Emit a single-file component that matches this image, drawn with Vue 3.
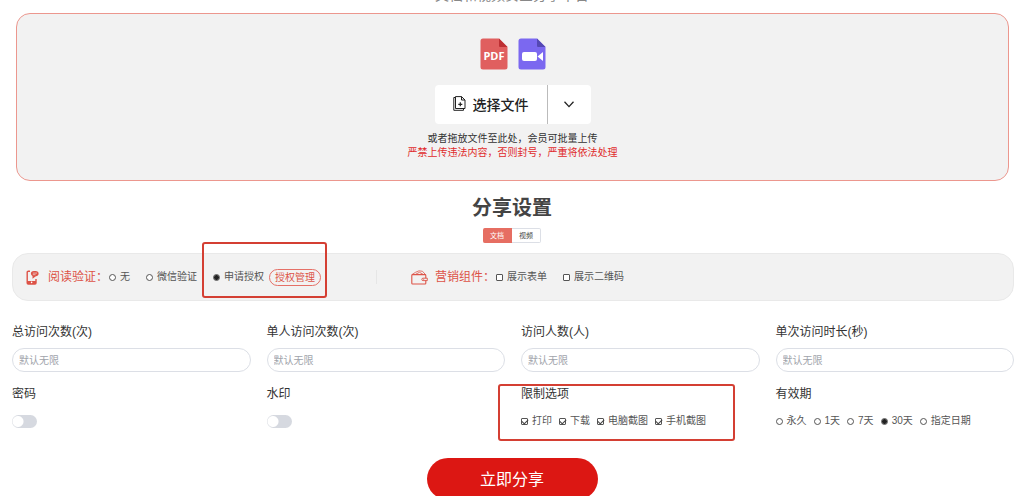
<script setup>
import { ref, reactive } from 'vue'

const kind = ref('文档')
const verify = ref('申请授权')
const verifyOptions = ['无', '微信验证', '申请授权']
const widgets = reactive([
  { name: '展示表单', on: false },
  { name: '展示二维码', on: false }
])
const fields = ['总访问次数(次)', '单人访问次数(次)', '访问人数(人)', '单次访问时长(秒)']
const switches = reactive([
  { name: '密码', on: false },
  { name: '水印', on: false }
])
const limits = reactive([
  { name: '打印', on: true },
  { name: '下载', on: true },
  { name: '电脑截图', on: true },
  { name: '手机截图', on: true }
])
const expiry = ref('30天')
const expiryOptions = ['永久', '1天', '7天', '30天', '指定日期']
</script>

<template>
  <main class="page">
    <p class="intro">文档和视频安全分享平台</p>

    <section class="drop">
      <div class="types">
        <svg class="type" viewBox="0 0 28 32" aria-hidden="true">
          <path d="M3 0.5H19L27.5 9V29a2.500 2.500 0 0 1-2.500 2.500H3A2.500 2.500 0 0 1 .5 29V3A2.500 2.500 0 0 1 3 .5z" fill="#e05f5f" />
          <path d="M19 .5L27.500 9H20a1 1 0 0 1-1-1z" fill="#bd2f33" />
          <text x="14" y="22" text-anchor="middle" class="pdf">PDF</text>
        </svg>
        <svg class="type" viewBox="0 0 28 32" aria-hidden="true">
          <path d="M3 0.5H19L27.5 9V29a2.500 2.500 0 0 1-2.500 2.500H3A2.500 2.500 0 0 1 .5 29V3A2.500 2.500 0 0 1 3 .5z" fill="#7b68f0" />
          <path d="M19 .5L27.500 9H20a1 1 0 0 1-1-1z" fill="#5548b4" />
          <rect x="4" y="14" width="15" height="9" rx="2" fill="#fff" />
          <path d="M19.500 18.500L25 14V23z" fill="#fff" />
        </svg>
      </div>
      <div class="picker">
        <button type="button" class="choose">
          <svg class="file" viewBox="0 0 13 15" fill="none" stroke="#222" aria-hidden="true">
            <path d="M2.500 .6H8.500L12 4V12.500H2.500z" />
            <path d="M8.500 .6V4H12" />
            <path d="M2.500 1.500H.8V14.300H10.500V12.700" />
            <path d="M7.300 6.300V10.300M5.300 8.300H9.300" stroke-width="1.200" />
          </svg>
          选择文件
        </button>
        <button type="button" class="more" aria-label="更多">
          <svg class="arrow" viewBox="0 0 10 7" fill="none" stroke="#222" stroke-width="1.300" aria-hidden="true">
            <path d="M.5 .8L5 5.600L9.500 .8" />
          </svg>
        </button>
      </div>
      <p class="hint">或者拖放文件至此处，会员可批量上传</p>
      <p class="hint warn">严禁上传违法内容，否则封号，严重将依法处理</p>
    </section>

    <h1 class="title">分享设置</h1>
    <div class="tabs">
      <button v-for="k in ['文档', '视频']" :key="k" type="button" class="tab" :class="{ active: kind === k }" @click="kind = k">{{ k }}</button>
    </div>

    <section class="bar">
      <div class="group verify">
        <svg class="phone" viewBox="0 0 13 15" fill="none" aria-hidden="true">
          <path d="M4 1.200H2.300Q1.200 1.200 1.200 2.200V13Q1.200 14 2.200 14H9Q10 14 10 13V9" stroke="#dd5347" stroke-width="1.400" />
          <path d="M1 11H10V14H1z" fill="#dd5347" />
          <circle cx="5.600" cy="12.400" r=".8" fill="#fff" />
          <path d="M7.800 1H9.500Q12.600 1 12.600 3.600Q12.600 6.200 9.500 6.500L6.500 8.800V6Q4.900 5.200 4.900 3.600Q4.900 1 7.800 1z" fill="#dd5347" />
          <path d="M6.800 3.100H11M6.800 4.700H9.500" stroke="#f2f2f2" stroke-width=".6" />
        </svg>
        <span class="heading">阅读验证：</span>
        <div class="choices wide">
          <label v-for="o in verifyOptions" :key="o" class="choice">
            <input v-model="verify" type="radio" name="verify" :value="o" />{{ o }}
          </label>
        </div>
        <button type="button" class="manage">授权管理</button>
        <i class="mark mark-verify"></i>
      </div>
      <div class="group">
        <svg class="wallet" viewBox="0 0 17 15" fill="none" stroke="#dd5347" aria-hidden="true">
          <rect x=".8" y="4.600" width="14" height="9.400" rx=".8" stroke-width="1.100" />
          <path d="M1 4.600L4.500 2.300L8 .8L11.500 1.300L14.500 4.600M4.500 4.300L8.500 2.300L12 4.300" stroke-width=".8" />
          <path d="M16.300 8.200H12Q10.800 8.200 10.800 9.400T12 10.600H16.300z" fill="#f2f2f2" stroke-width=".9" />
          <circle cx="12.700" cy="9.400" r=".3" stroke-width=".6" />
        </svg>
        <span class="heading">营销组件：</span>
        <div class="choices wide">
          <label v-for="w in widgets" :key="w.name" class="choice">
            <input v-model="w.on" type="checkbox" />{{ w.name }}
          </label>
        </div>
      </div>
    </section>

    <form class="grid" @submit.prevent>
      <div v-for="(f, i) in fields" :key="f" class="cell">
        <label class="label" :for="'field' + i">{{ f }}</label>
        <input :id="'field' + i" class="text" type="text" placeholder="默认无限" />
      </div>
      <div v-for="(s, i) in switches" :key="s.name" class="cell">
        <label class="label" :for="'switch' + i">{{ s.name }}</label>
        <div class="choices">
          <input :id="'switch' + i" v-model="s.on" class="switch" type="checkbox" role="switch" />
        </div>
      </div>
      <div class="cell">
        <span class="label">限制选项</span>
        <div class="choices">
          <label v-for="l in limits" :key="l.name" class="choice">
            <input v-model="l.on" type="checkbox" />{{ l.name }}
          </label>
        </div>
        <i class="mark mark-limits"></i>
      </div>
      <div class="cell">
        <span class="label">有效期</span>
        <div class="choices">
          <label v-for="e in expiryOptions" :key="e" class="choice">
            <input v-model="expiry" type="radio" name="expiry" :value="e" />{{ e }}
          </label>
        </div>
      </div>
    </form>

    <button type="button" class="submit">立即分享</button>
  </main>
</template>

<style>
html {
  scrollbar-width: none;
}
body {
  margin: 0;
  background: #fff;
}
</style>

<style scoped>
.page,
.page button,
.page input {
  font-family: "Liberation Sans", "Noto Sans CJK SC", sans-serif;
}
.page {
  display: flex;
  flex-direction: column;
  align-items: center;
  overflow: hidden;
  color: #333;
}
.page * {
  box-sizing: border-box;
}
p,
h1 {
  margin: 0;
}
button {
  padding: 0;
  border: 0;
  cursor: pointer;
}
.intro {
  height: 20px;
  margin-top: -15px;
  font-size: 14px;
  line-height: 20px;
  color: #888;
}
.drop {
  display: flex;
  flex-direction: column;
  align-items: center;
  align-self: stretch;
  margin: 8px 15px 0 16px;
  padding: 24px 0 20px;
  border: 1px solid #ec978e;
  border-radius: 14px;
  background: #f2f2f2;
}
.types {
  display: flex;
  gap: 10px;
}
.type {
  width: 28px;
  height: 32px;
}
.pdf {
  font: bold 11px "Open Sans", sans-serif;
  fill: #fff;
}
.picker {
  display: flex;
  height: 39px;
  margin: 15px 0 8px;
  border-radius: 4px;
  background: #fff;
}
.choose {
  display: flex;
  align-items: center;
  justify-content: center;
  gap: 7px;
  width: 113px;
  padding-bottom: 2px;
  border-right: 1px solid #bbb;
  background: none;
  font-size: 14px;
  font-weight: 500;
  color: #222;
}
.file {
  width: 13px;
  height: 15px;
}
.more {
  width: 43px;
  padding-bottom: 2px;
  background: none;
}
.arrow {
  width: 10px;
  height: 7px;
}
.hint {
  font-size: 10px;
  line-height: 14px;
}
.warn {
  color: #e02b2b;
}
.title {
  margin-top: 12px;
  font-size: 20px;
  line-height: 30px;
  font-weight: 700;
  color: #444;
}
.tabs {
  display: flex;
  height: 15px;
  margin-top: 5px;
}
.tab {
  width: 29px;
  border: 1px solid #dcdfe6;
  border-left: 0;
  border-radius: 0 2px 2px 0;
  background: #fff;
  font-size: 7px;
  line-height: 12px;
  color: #444;
}
.tab:first-child {
  border-radius: 2px 0 0 2px;
}
.tab.active {
  border-color: #e66e62;
  background: #e66e62;
  color: #fff;
}
.bar {
  display: flex;
  align-items: center;
  align-self: stretch;
  height: 48px;
  margin: 10px 10px 0 12px;
  border: 1px solid #e9e9e9;
  border-radius: 16px;
  background: #f2f2f2;
}
.group {
  position: relative;
  display: flex;
  align-items: center;
}
.verify {
  flex: 0 0 364px;
  height: 14px;
  margin-right: 34px;
  padding-left: 13px;
  border-right: 1px solid #e6e6e6;
}
.phone {
  width: 13px;
  height: 15px;
  margin-right: 9px;
}
.wallet {
  width: 17px;
  height: 15px;
  margin-right: 7px;
}
.heading {
  width: 61px;
  font-size: 12px;
  line-height: 18px;
  color: #dd5347;
  white-space: nowrap;
}
.choices {
  display: flex;
  align-items: center;
  gap: 7px;
  height: 16px;
}
.wide {
  gap: 16px;
}
.choice {
  display: flex;
  align-items: center;
  gap: 4px;
  font-size: 10px;
  line-height: 16px;
  color: #555;
  white-space: nowrap;
}
.choice input {
  appearance: none;
  position: relative;
  flex: none;
  width: 7px;
  height: 7px;
  margin: 0;
  border: 1px solid #555;
  border-radius: 1px;
  background: #fff;
}
.choice input[type="radio"] {
  border-radius: 50%;
}
.choice input[type="radio"]:checked {
  background: radial-gradient(circle, #222 0 2px, #bbb 3px);
}
.choice input[type="checkbox"]:checked::after {
  content: "";
  position: absolute;
  left: 1px;
  top: -1px;
  width: 3px;
  height: 5px;
  border: solid #444;
  border-width: 0 1px 1px 0;
  transform: rotate(45deg);
}
.manage {
  height: 17px;
  margin-left: 5px;
  padding: 0 5px;
  border: 1px solid #e57067;
  border-radius: 9px;
  background: none;
  font-size: 10px;
  line-height: 15px;
  color: #dd5347;
}
.mark {
  position: absolute;
  border: 2px solid #d43f33;
  border-radius: 3px;
  pointer-events: none;
}
.mark-verify {
  left: 189px;
  top: -28px;
  width: 125px;
  height: 56px;
}
.mark-limits {
  left: -23px;
  top: 0;
  width: 237px;
  height: 57px;
}
.grid {
  display: grid;
  grid-template-columns: repeat(4, 1fr);
  align-self: stretch;
  gap: 12px 16px;
  margin: 21px 10px 0 12px;
}
.cell {
  position: relative;
  display: flex;
  flex-direction: column;
}
.label {
  font-size: 12px;
  line-height: 20px;
}
.text {
  width: 100%;
  height: 24px;
  margin-top: 6px;
  padding: 0 6px;
  border: 1px solid #dcdfe6;
  border-radius: 12px;
  font-size: 10px;
  color: #333;
}
.text::placeholder {
  color: #a0a3aa;
}
.cell .choices {
  margin-top: 9px;
}
.switch {
  appearance: none;
  width: 25px;
  height: 13px;
  margin: 0;
  border-radius: 7px;
  background: radial-gradient(circle at 6px 50%, #fff 5px, transparent 6px), #d6d9e0;
}
.submit {
  width: 171px;
  height: 42px;
  margin-top: 29px;
  padding-bottom: 2px;
  border-radius: 21px;
  background: #dc1713;
  font-size: 16px;
  color: #fff;
}
</style>
